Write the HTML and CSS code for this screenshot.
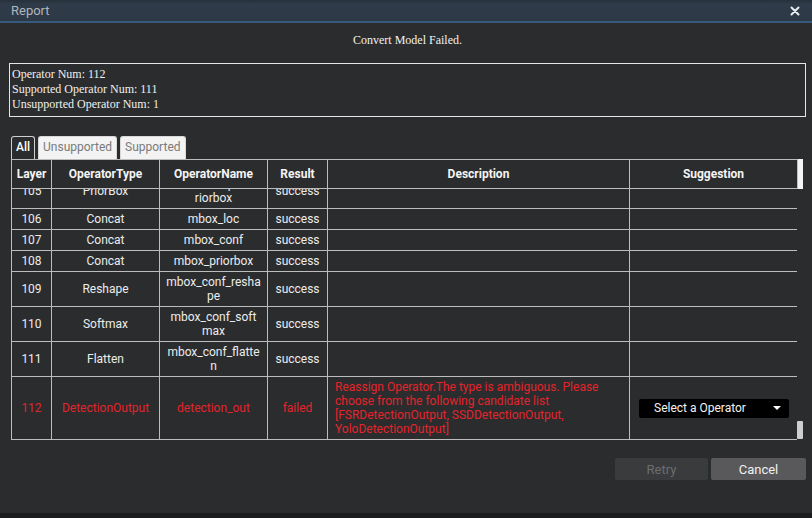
FILE: index.html
```html
<!DOCTYPE html>
<html>
<head>
<meta charset="utf-8">
<title>Report</title>
<link rel="stylesheet" href="styles.css">
</head>
<body>
<div class="dialog">
  <header class="titlebar">
    <span class="title">Report</span>
    <svg class="close" width="10" height="10" viewBox="0 0 10 10"><path d="M1.5 1.5 L8.5 8.5 M8.5 1.5 L1.5 8.5" stroke="#e8ecf0" stroke-width="2" stroke-linecap="round"/></svg>
  </header>
  <main class="content">
    <p class="status">Convert Model Failed.</p>
    <div class="summary">
      <div>Operator Num: 112</div>
      <div>Supported Operator Num: 111</div>
      <div>Unsupported Operator Num: 1</div>
    </div>
    <div class="tabs">
      <span class="tab active">All</span>
      <span class="tab">Unsupported</span>
      <span class="tab">Supported</span>
    </div>
    <div class="grid">
      <div class="grid-head">
        <table class="tbl">
          <colgroup><col class="c1"><col class="c2"><col class="c3"><col class="c4"><col class="c5"><col class="c6"></colgroup>
          <tr><th>Layer</th><th>OperatorType</th><th>OperatorName</th><th>Result</th><th>Description</th><th>Suggestion</th></tr>
        </table>
        <div class="sb-head"></div>
      </div>
      <div class="grid-body">
        <div class="viewport">
          <table class="tbl body">
            <colgroup><col class="c1"><col class="c2"><col class="c3"><col class="c4"><col class="c5"><col class="c6"></colgroup>
            <tr><td>105</td><td>PriorBox</td><td>mbox_p<br>riorbox</td><td>success</td><td class="desc"></td><td></td></tr>
            <tr><td>106</td><td>Concat</td><td>mbox_loc</td><td>success</td><td class="desc"></td><td></td></tr>
            <tr><td>107</td><td>Concat</td><td>mbox_conf</td><td>success</td><td class="desc"></td><td></td></tr>
            <tr><td>108</td><td>Concat</td><td>mbox_priorbox</td><td>success</td><td class="desc"></td><td></td></tr>
            <tr><td>109</td><td>Reshape</td><td>mbox_conf_resha<br>pe</td><td>success</td><td class="desc"></td><td></td></tr>
            <tr><td>110</td><td>Softmax</td><td>mbox_conf_soft<br>max</td><td>success</td><td class="desc"></td><td></td></tr>
            <tr><td>111</td><td>Flatten</td><td>mbox_conf_flatte<br>n</td><td>success</td><td class="desc"></td><td></td></tr>
            <tr class="failed"><td>112</td><td>DetectionOutput</td><td>detection_out</td><td>failed</td><td class="desc">Reassign Operator.The type is ambiguous. Please choose from the following candidate list [FSRDetectionOutput, SSDDetectionOutput, YoloDetectionOutput]</td><td><div class="select"><span>Select a Operator</span><span class="caret"></span></div></td></tr>
          </table>
        </div>
        <div class="sb-track"><div class="sb-thumb"></div></div>
      </div>
    </div>
    <div class="actions">
      <button class="btn retry" disabled>Retry</button>
      <button class="btn cancel">Cancel</button>
    </div>
  </main>
  <div class="taskbar"></div>
</div>
</body>
</html>
```

FILE: styles.css
```css
* { box-sizing: border-box; }
html, body { margin: 0; padding: 0; }
body { background: #2b2c2e; width: 812px; height: 518px; overflow: hidden; }

.dialog { width: 812px; height: 518px; display: flex; flex-direction: column; background: #2b2c2e; }

.titlebar {
  height: 23px;
  display: flex; align-items: center; justify-content: space-between;
  padding: 0 12px 0 11px;
  background: linear-gradient(#26313c, #2f3b48 20%, #2d3946);
  border-bottom: 2px solid #375a7a;
}
.title { font-family: Roboto, "Liberation Sans", sans-serif; font-size: 13px; color: #aeb6bf; }
.close { display: block; }

.content { flex: 1; display: flex; flex-direction: column; padding: 0 6px 0 9px; }

.status {
  margin: 10px 0 0; height: 30px; line-height: 15px;
  text-align: center; color: #f2f2f2;
  font-family: "Liberation Serif", serif; font-size: 12px;
}

.summary {
  border: 1px solid #e6e6e6;
  padding: 3px 2px 4px;
  font-family: "Liberation Serif", serif; font-size: 12px; line-height: 15px; color: #f0f0f0;
}

.tabs { display: flex; gap: 3px; margin: 19px 0 0 2px; height: 23px; }
.tab {
  font-family: Roboto, sans-serif; font-size: 12px; line-height: 20px;
  padding: 0 4px; border: 1px solid #d8d8d8; border-bottom: none;
  border-radius: 3px 3px 0 0;
  background: #f3f3f3; color: #7a7a7a;
}
.tab.active { background: #2b2c2e; color: #fff; border-color: #cfcfcf; font-weight: 500; }

.grid { margin-left: 2px; width: 792px; }
.grid-head, .grid-body { display: flex; }
.tbl {
  width: 786px; table-layout: fixed; border-collapse: collapse;
  font-family: Roboto, sans-serif; font-size: 12px; line-height: 14px; color: #ececec;
}
.c1 { width: 40px; } .c2 { width: 108px; } .c3 { width: 108px; }
.c4 { width: 60px; } .c5 { width: 302px; } .c6 { width: 168px; }
.tbl th, .tbl td { border: 1px solid #bdbdbd; text-align: center; vertical-align: middle; overflow: hidden; }
.tbl th { padding: 7px 2px; font-weight: 700; color: #f4f4f4; }
.tbl td { padding: 3px 2px; }
.tbl td.desc { text-align: left; padding: 3px 6px 3px 7px; }
.failed td { color: #e3242b; }

.sb-head { width: 6px; background: #f4f4f4; }
.viewport { width: 786px; overflow: hidden; }
.viewport .body { margin-top: -16px; }
.sb-track { width: 6px; display: flex; flex-direction: column; justify-content: flex-end; }
.sb-thumb { height: 18px; background: #cfcfcf; border-radius: 1px; margin-bottom: 1px; }

.select {
  margin: 0 6px 0 7px; height: 19px; background: #000; border-radius: 2px;
  display: flex; align-items: center; justify-content: space-between;
  padding: 0 8px 0 15px; color: #f4f4f4; font-size: 12px;
}
.caret { width: 0; height: 0; border-left: 4px solid transparent; border-right: 4px solid transparent; border-top: 4px solid #fff; }

.actions { display: flex; justify-content: flex-end; gap: 3px; margin-top: 18px; }
.btn {
  height: 22px; border: none; border-radius: 2px;
  font-family: Roboto, sans-serif; font-size: 13px; padding: 0;
}
.retry { width: 93px; background: #3a3b3d; color: #6d6e71; }
.cancel { width: 95px; background: #59595b; color: #f0f0f0; }

.taskbar { height: 5px; margin-top: auto; background: #1b1c1e; }
```
